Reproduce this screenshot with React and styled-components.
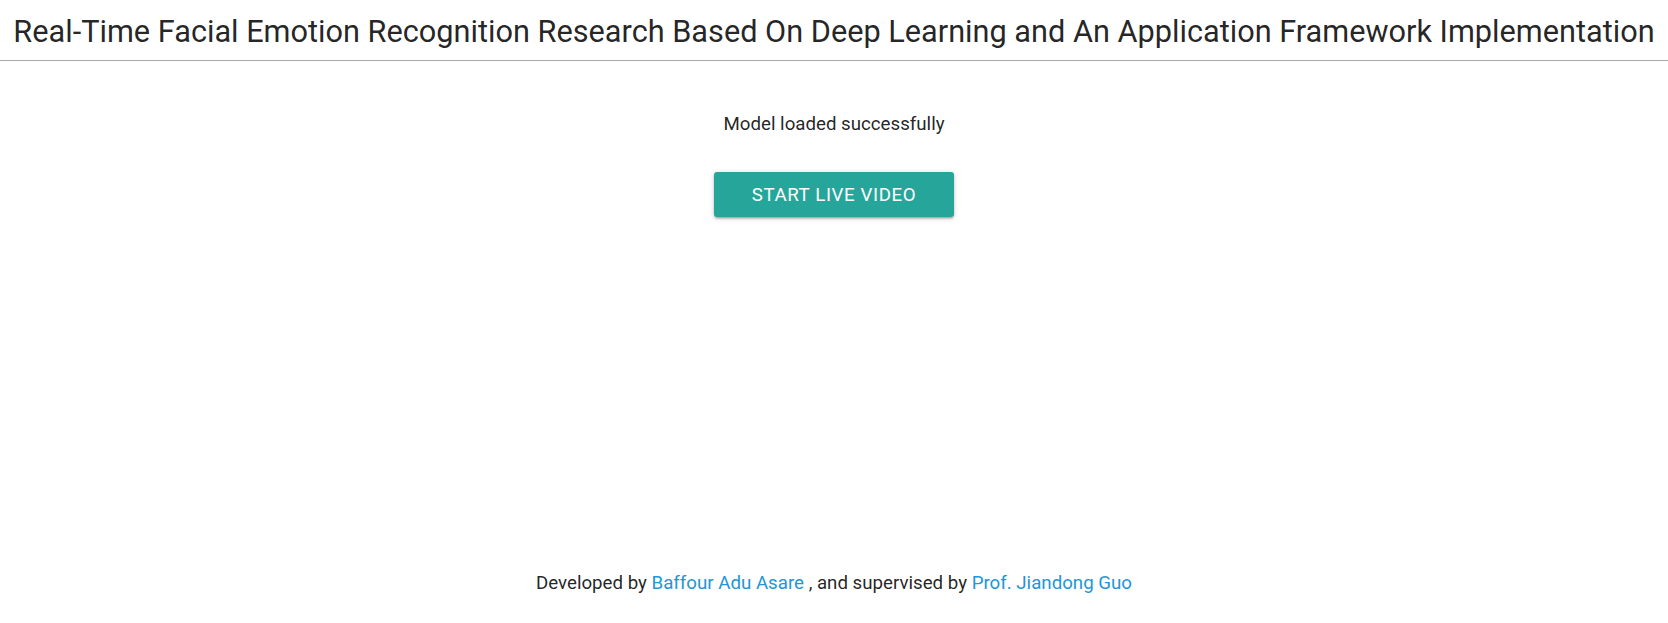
import React from 'react';
import styled, { createGlobalStyle } from 'styled-components';

const GlobalStyle = createGlobalStyle`
  html, body {
    margin: 0;
    padding: 0;
    background: #fff;
  }
  body {
    font-family: Roboto, "Liberation Sans", sans-serif;
    color: rgba(0, 0, 0, 0.87);
  }
`;

const App = () => {
  return (
    <>
      <GlobalStyle />
      <Page>
        <Header>
          <Title>
            Real-Time Facial Emotion Recognition Research Based On Deep Learning and An Application Framework Implementation
          </Title>
        </Header>
        <Main>
          <Status>Model loaded successfully</Status>
          <StartButton type="button">Start Live Video</StartButton>
        </Main>
        <Footer>
          Developed by <Link href="#">Baffour Adu Asare</Link> , and supervised by{' '}
          <Link href="#">Prof. Jiandong Guo</Link>
        </Footer>
      </Page>
    </>
  );
};

export default App;

const Page = styled.div`
  display: flex;
  flex-direction: column;
  min-height: 100vh;
`;

const Header = styled.header`
  padding: 14px 0 10px;
  border-bottom: 1px solid #a8a8a8;
  text-align: center;
`;

const Title = styled.h1`
  margin: 0;
  font-size: 30.7px;
  font-weight: 400;
  line-height: 36px;
  white-space: nowrap;
`;

const Main = styled.main`
  display: flex;
  flex-direction: column;
  align-items: center;
  padding-top: 50px;
`;

const Status = styled.p`
  margin: 0 0 35px;
  font-size: 18.7px;
  line-height: 26px;
`;

const StartButton = styled.button`
  width: 240px;
  height: 45px;
  padding: 0;
  border: none;
  border-radius: 3px;
  background-color: #26a69a;
  color: #fff;
  font-family: Roboto, "Liberation Sans", sans-serif;
  font-size: 18.7px;
  letter-spacing: 0.6px;
  text-transform: uppercase;
  cursor: pointer;
  box-shadow: 0 2px 2px 0 rgba(0, 0, 0, 0.14), 0 3px 1px -2px rgba(0, 0, 0, 0.12),
    0 1px 5px 0 rgba(0, 0, 0, 0.2);
`;

const Footer = styled.footer`
  margin-top: auto;
  padding-bottom: 27px;
  text-align: center;
  font-size: 18.7px;
  line-height: 26px;
`;

const Link = styled.a`
  color: #2196d8;
  text-decoration: none;
`;
